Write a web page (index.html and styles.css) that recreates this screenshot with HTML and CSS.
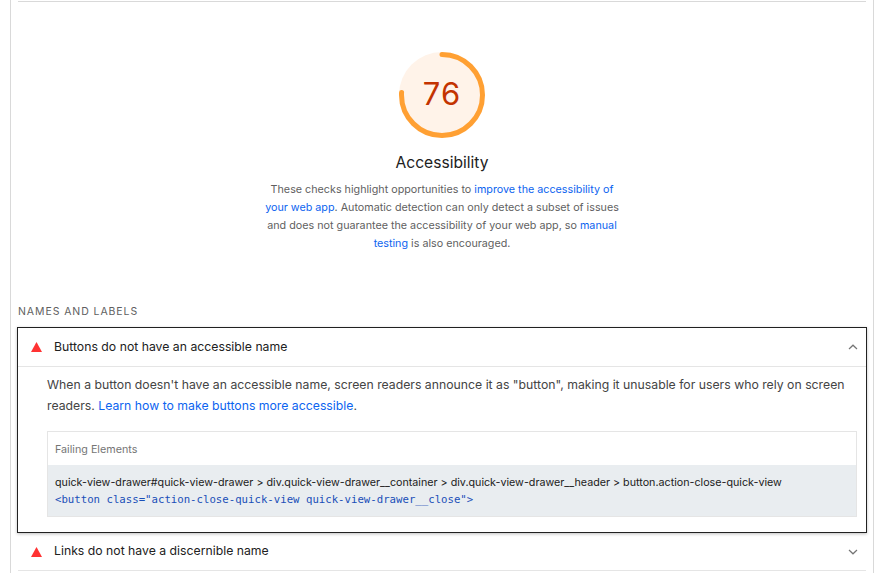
FILE: index.html
```html
<!DOCTYPE html>
<html lang="en">
<head>
<meta charset="utf-8">
<title>Accessibility</title>
<link rel="stylesheet" href="styles.css">
</head>
<body>
<main class="panel">
  <section class="summary">
    <div class="gauge">
      <svg class="gauge-ring" width="88" height="88" viewBox="0 0 88 88">
        <circle class="gauge-base" cx="44" cy="44" r="43"/>
        <circle class="gauge-arc" cx="44" cy="44" r="40.5" pathLength="100" stroke-dasharray="76 100" transform="rotate(-90 44 44)"/>
      </svg>
      <span class="gauge-score">76</span>
    </div>
    <h1 class="summary-title">Accessibility</h1>
    <p class="summary-text">These checks highlight opportunities to <a href="#">improve the accessibility of your web app</a>. Automatic detection can only detect a subset of issues and does not guarantee the accessibility of your web app, so <a href="#">manual testing</a> is also encouraged.</p>
  </section>
  <h2 class="group-title">NAMES AND LABELS</h2>
  <article class="audit audit-open">
    <header class="audit-head">
      <svg class="audit-flag" width="11" height="10" viewBox="0 0 11 10"><path d="M5.5 0 11 10H0z"/></svg>
      <span class="audit-title">Buttons do not have an accessible name</span>
      <svg class="audit-chevron" width="10" height="6" viewBox="0 0 10 6"><path d="M1 5 5 1.2 9 5"/></svg>
    </header>
    <div class="audit-body">
      <p class="audit-desc">When a button doesn't have an accessible name, screen readers announce it as "button", making it unusable for users who rely on screen readers. <a href="#">Learn how to make buttons more accessible</a>.</p>
      <div class="failing">
        <div class="failing-head">Failing Elements</div>
        <div class="failing-row">
          <div class="failing-path">quick-view-drawer#quick-view-drawer &gt; div.quick-view-drawer__container &gt; div.quick-view-drawer__header &gt; button.action-close-quick-view</div>
          <code class="failing-code">&lt;button class="action-close-quick-view quick-view-drawer__close"&gt;</code>
        </div>
      </div>
    </div>
  </article>
  <article class="audit audit-closed">
    <header class="audit-head">
      <svg class="audit-flag" width="11" height="10" viewBox="0 0 11 10"><path d="M5.5 0 11 10H0z"/></svg>
      <span class="audit-title">Links do not have a discernible name</span>
      <svg class="audit-chevron" width="10" height="6" viewBox="0 0 10 6"><path d="M1 1 5 4.8 9 1"/></svg>
    </header>
  </article>
</main>
</body>
</html>
```
FILE: styles.css
```css
html, body {
  margin: 0;
  padding: 0;
  background: #fff;
  overflow: hidden;
}
body {
  font-family: Inter, "Liberation Sans", sans-serif;
  color: #212121;
}
a {
  color: #0c64f0;
  text-decoration: none;
}
.panel {
  margin: 0 2px 0 10px;
  border-left: 1px solid #d9d9d9;
  border-right: 1px solid #d9d9d9;
  padding: 1px 7px 0;
  height: 572px;
}
.summary {
  border-top: 1px solid #d9d9d9;
  display: flex;
  flex-direction: column;
  align-items: center;
  padding-top: 49px;
}
.gauge {
  position: relative;
  width: 88px;
  height: 88px;
}
.gauge-ring {
  display: block;
}
.gauge-base {
  fill: #fff3e9;
}
.gauge-arc {
  fill: none;
  stroke: #ffa033;
  stroke-width: 5px;
  stroke-linecap: round;
}
.gauge-score {
  position: absolute;
  inset: 0 0 3px;
  display: flex;
  align-items: center;
  justify-content: center;
  font-size: 31px;
  letter-spacing: 1px;
  color: #c33300;
}
.summary-title {
  margin: 14px 0 0;
  font-size: 15.6px;
  line-height: 20px;
  font-weight: 400;
  color: #212121;
}
.summary-text {
  margin: 8px 0 0;
  width: 360px;
  font-size: 10.75px;
  line-height: 18px;
  text-align: center;
  color: #5f5f5f;
}
.group-title {
  margin: 52px 0 0;
  font-size: 10.5px;
  line-height: 14px;
  font-weight: 400;
  letter-spacing: 0.92px;
  color: #5f5f5f;
}
.audit-open {
  margin: 8px -1px 0;
  border: 1px solid #212121;
  box-shadow: 0 1px 3px rgba(0, 0, 0, .25);
}
.audit-head {
  display: flex;
  align-items: center;
  height: 38px;
  padding: 0 8px 0 13px;
  border-bottom: 1px solid #e5e5e5;
}
.audit-flag {
  flex: none;
  fill: #ff3333;
}
.audit-title {
  flex: 1;
  margin: 0 0 2px 12px;
  font-size: 12.25px;
  color: #212121;
}
.audit-chevron {
  flex: none;
  fill: none;
  stroke: #757575;
  stroke-width: 1.2px;
}
.audit-body {
  padding: 7px 9px 15px 29px;
}
.audit-desc {
  margin: 0;
  font-size: 12.26px;
  line-height: 21px;
  color: #444;
}
.failing {
  margin-top: 15px;
  border: 1px solid #e5e5e5;
}
.failing-head {
  height: 33px;
  padding: 2px 0 0 7px;
  box-sizing: border-box;
  display: flex;
  align-items: center;
  font-size: 10.75px;
  color: #757575;
}
.failing-row {
  background: #e9edf0;
  padding: 10px 7px 8px;
}
.failing-path {
  font-size: 10.72px;
  line-height: 16px;
  color: #212121;
  white-space: nowrap;
}
.failing-code {
  display: block;
  font-family: "DejaVu Sans Mono", "Liberation Mono", monospace;
  font-size: 10.7px;
  line-height: 17px;
  color: #1a4fb8;
  white-space: nowrap;
}
.audit-closed .audit-head {
  height: 37px;
}
```
